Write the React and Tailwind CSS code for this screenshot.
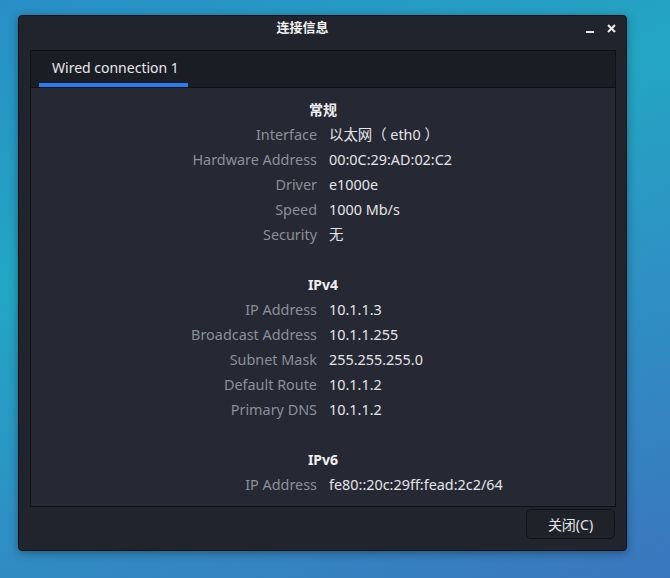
import React from "react";

const sections = [
  {
    title: "常规",
    rows: [
      ["Interface", "以太网（ eth0 ）"],
      ["Hardware Address", "00:0C:29:AD:02:C2"],
      ["Driver", "e1000e"],
      ["Speed", "1000 Mb/s"],
      ["Security", "无"],
    ],
  },
  {
    title: "IPv4",
    rows: [
      ["IP Address", "10.1.1.3"],
      ["Broadcast Address", "10.1.1.255"],
      ["Subnet Mask", "255.255.255.0"],
      ["Default Route", "10.1.1.2"],
      ["Primary DNS", "10.1.1.2"],
    ],
  },
  {
    title: "IPv6",
    rows: [["IP Address", "fe80::20c:29ff:fead:2c2/64"]],
  },
];

function InfoRow({ label, value }) {
  return (
    <div className="flex h-[25px] items-center text-[14.4px]">
      <div className="w-[286px] shrink-0 text-right text-[#8b909a]">{label}</div>
      <div className="pl-[12px] text-[#e4e5e8]">{value}</div>
    </div>
  );
}

export default function App() {
  return (
    <div
      className="relative h-[578px] w-[670px] overflow-hidden bg-[linear-gradient(160deg,#2a8ec6_0%,#23a6c3_35%,#2f8fc4_65%,#3a76bd_100%)] pl-[18px] pt-[15px]"
      style={{ fontFamily: '"Noto Sans", "Noto Sans CJK SC", sans-serif' }}
    >
      {/* dialog */}
      <div className="flex h-[536px] w-[609px] flex-col rounded-[4px] border border-[#101117] bg-[#22242d] shadow-[0_2px_10px_rgba(0,0,0,0.35)]">
        {/* title bar */}
        <div className="relative flex h-[24px] items-center justify-center pr-[40px]">
          <span className="text-[13px] font-bold text-[#f2f2f2]">连接信息</span>
          <div className="absolute right-[10px] top-[8px] flex items-center gap-[13px]">
            <div className="mt-[7px] h-[2px] w-[8px] bg-[#e8e8e8]" />
            <svg width="9" height="9" viewBox="0 0 9 9">
              <path d="M1 1 L8 8 M8 1 L1 8" stroke="#eeeeee" strokeWidth="2" />
            </svg>
          </div>
        </div>

        {/* notebook panel */}
        <div className="ml-[11px] mt-[10px] flex h-[457px] w-[586px] flex-col border border-[#101117] bg-[#262833]">
          <div className="flex h-[37px] shrink-0 border-b border-[#111218] bg-[#1b1d25] pl-[8px]">
            <div className="flex w-[149px] flex-col justify-end border-b-[4px] border-[#2a7bf2]">
              <span className="pb-[5px] pl-[13px] text-[14px] text-[#e8e8ea]">Wired connection 1</span>
            </div>
          </div>

          <div className="flex flex-col pt-[9px]">
            {sections.map((s, i) => (
              <div key={s.title} className={i > 0 ? "mt-[25px]" : ""}>
                <div className="flex h-[25px] items-center justify-center text-[14px] font-bold text-[#f0f0f2]">
                  {s.title}
                </div>
                {s.rows.map(([l, v]) => (
                  <InfoRow key={l} label={l} value={v} />
                ))}
              </div>
            ))}
          </div>
        </div>

        {/* footer */}
        <div className="flex justify-end pr-[11px] pt-[2px]">
          <button className="h-[30px] w-[89px] rounded-[5px] border border-[#111218] bg-[#20222a] text-[14px] text-[#e6e6e8]">
            关闭(C)
          </button>
        </div>
      </div>
    </div>
  );
}
